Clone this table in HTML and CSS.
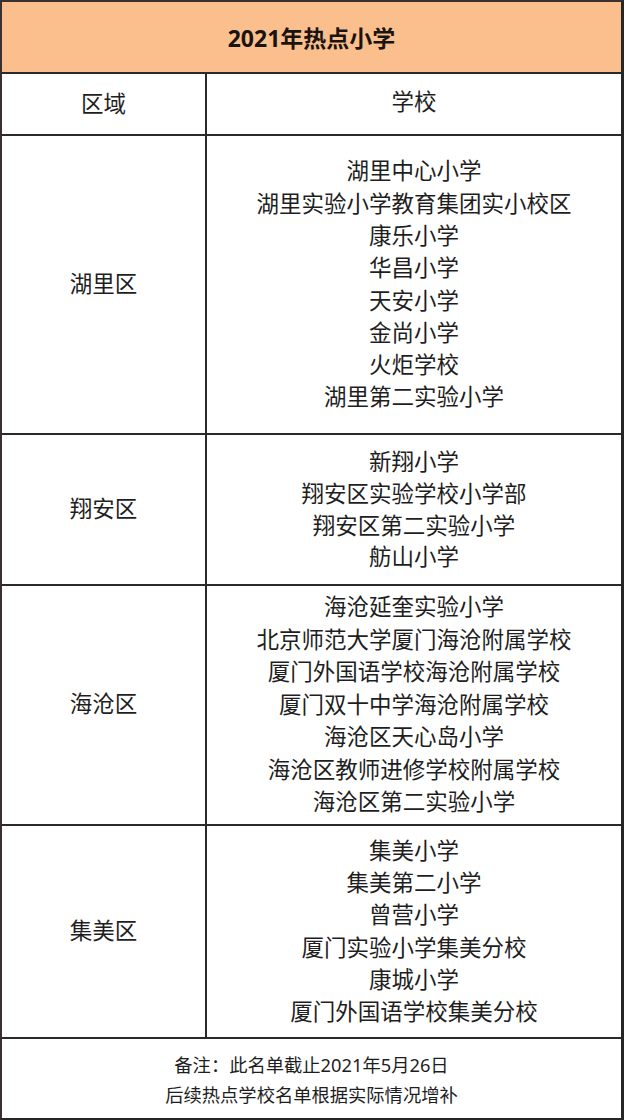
FILE: index.html
```html
<!DOCTYPE html>
<html lang="zh-CN">
<head>
<meta charset="utf-8">
<title>2021年热点小学</title>
<link rel="stylesheet" href="styles.css">
</head>
<body>
<div class="table">
  <div class="title">2021年热点小学</div>
  <div class="row row-head">
    <div class="area">区域</div>
    <div class="schools">学校</div>
  </div>
  <div class="row row-huli">
    <div class="area">湖里区</div>
    <div class="schools">
      <div>湖里中心小学</div>
      <div>湖里实验小学教育集团实小校区</div>
      <div>康乐小学</div>
      <div>华昌小学</div>
      <div>天安小学</div>
      <div>金尚小学</div>
      <div>火炬学校</div>
      <div>湖里第二实验小学</div>
    </div>
  </div>
  <div class="row row-xiangan">
    <div class="area">翔安区</div>
    <div class="schools">
      <div>新翔小学</div>
      <div>翔安区实验学校小学部</div>
      <div>翔安区第二实验小学</div>
      <div>舫山小学</div>
    </div>
  </div>
  <div class="row row-haicang">
    <div class="area">海沧区</div>
    <div class="schools">
      <div>海沧延奎实验小学</div>
      <div>北京师范大学厦门海沧附属学校</div>
      <div>厦门外国语学校海沧附属学校</div>
      <div>厦门双十中学海沧附属学校</div>
      <div>海沧区天心岛小学</div>
      <div>海沧区教师进修学校附属学校</div>
      <div>海沧区第二实验小学</div>
    </div>
  </div>
  <div class="row row-jimei">
    <div class="area">集美区</div>
    <div class="schools">
      <div>集美小学</div>
      <div>集美第二小学</div>
      <div>曾营小学</div>
      <div>厦门实验小学集美分校</div>
      <div>康城小学</div>
      <div>厦门外国语学校集美分校</div>
    </div>
  </div>
  <div class="note">
    <div>备注：此名单截止2021年5月26日</div>
    <div>后续热点学校名单根据实际情况增补</div>
  </div>
</div>
</body>
</html>
```
FILE: styles.css
```css
html, body {
  margin: 0;
  padding: 0;
  background: #ffffff;
}

body {
  font-family: "Noto Sans", "Noto Sans CJK SC", sans-serif;
  color: #1e1e1e;
}

.table {
  width: 624px;
  box-sizing: border-box;
  border: 2px solid #262626;
  border-right-width: 3px;
  border-left-color: #3a3030;
  border-top-color: #3a3030;
}

.title {
  height: 70px;
  background: #fbbf8e;
  border-bottom: 2px solid #2a2a2a;
  display: flex;
  align-items: center;
  justify-content: center;
  font-size: 23px;
  font-weight: 700;
  color: #1a1410;
}

.row {
  display: grid;
  grid-template-columns: 205px 1fr;
  border-bottom: 2px solid #2a2a2a;
}

.area {
  border-right: 2px solid #2a2a2a;
  display: flex;
  align-items: center;
  justify-content: center;
  font-size: 22.5px;
  padding-bottom: 5px;
}

.schools {
  display: flex;
  flex-direction: column;
  align-items: center;
  justify-content: center;
  font-size: 22.5px;
  line-height: 32.3px;
  text-align: center;
}

.row-head { height: 60px; }
.row-head .area,
.row-head .schools { padding-bottom: 4px; }
.row-huli { height: 297px; }
.row-xiangan { height: 149px; }
.row-xiangan .schools { line-height: 31.7px; }
.row-haicang { height: 238px; }
.row-haicang .schools { line-height: 32.5px; }
.row-jimei { height: 211px; }

.note {
  height: 79px;
  display: flex;
  flex-direction: column;
  align-items: center;
  justify-content: center;
  font-size: 18.3px;
  line-height: 30px;
  padding-top: 3px;
  box-sizing: border-box;
}
```
